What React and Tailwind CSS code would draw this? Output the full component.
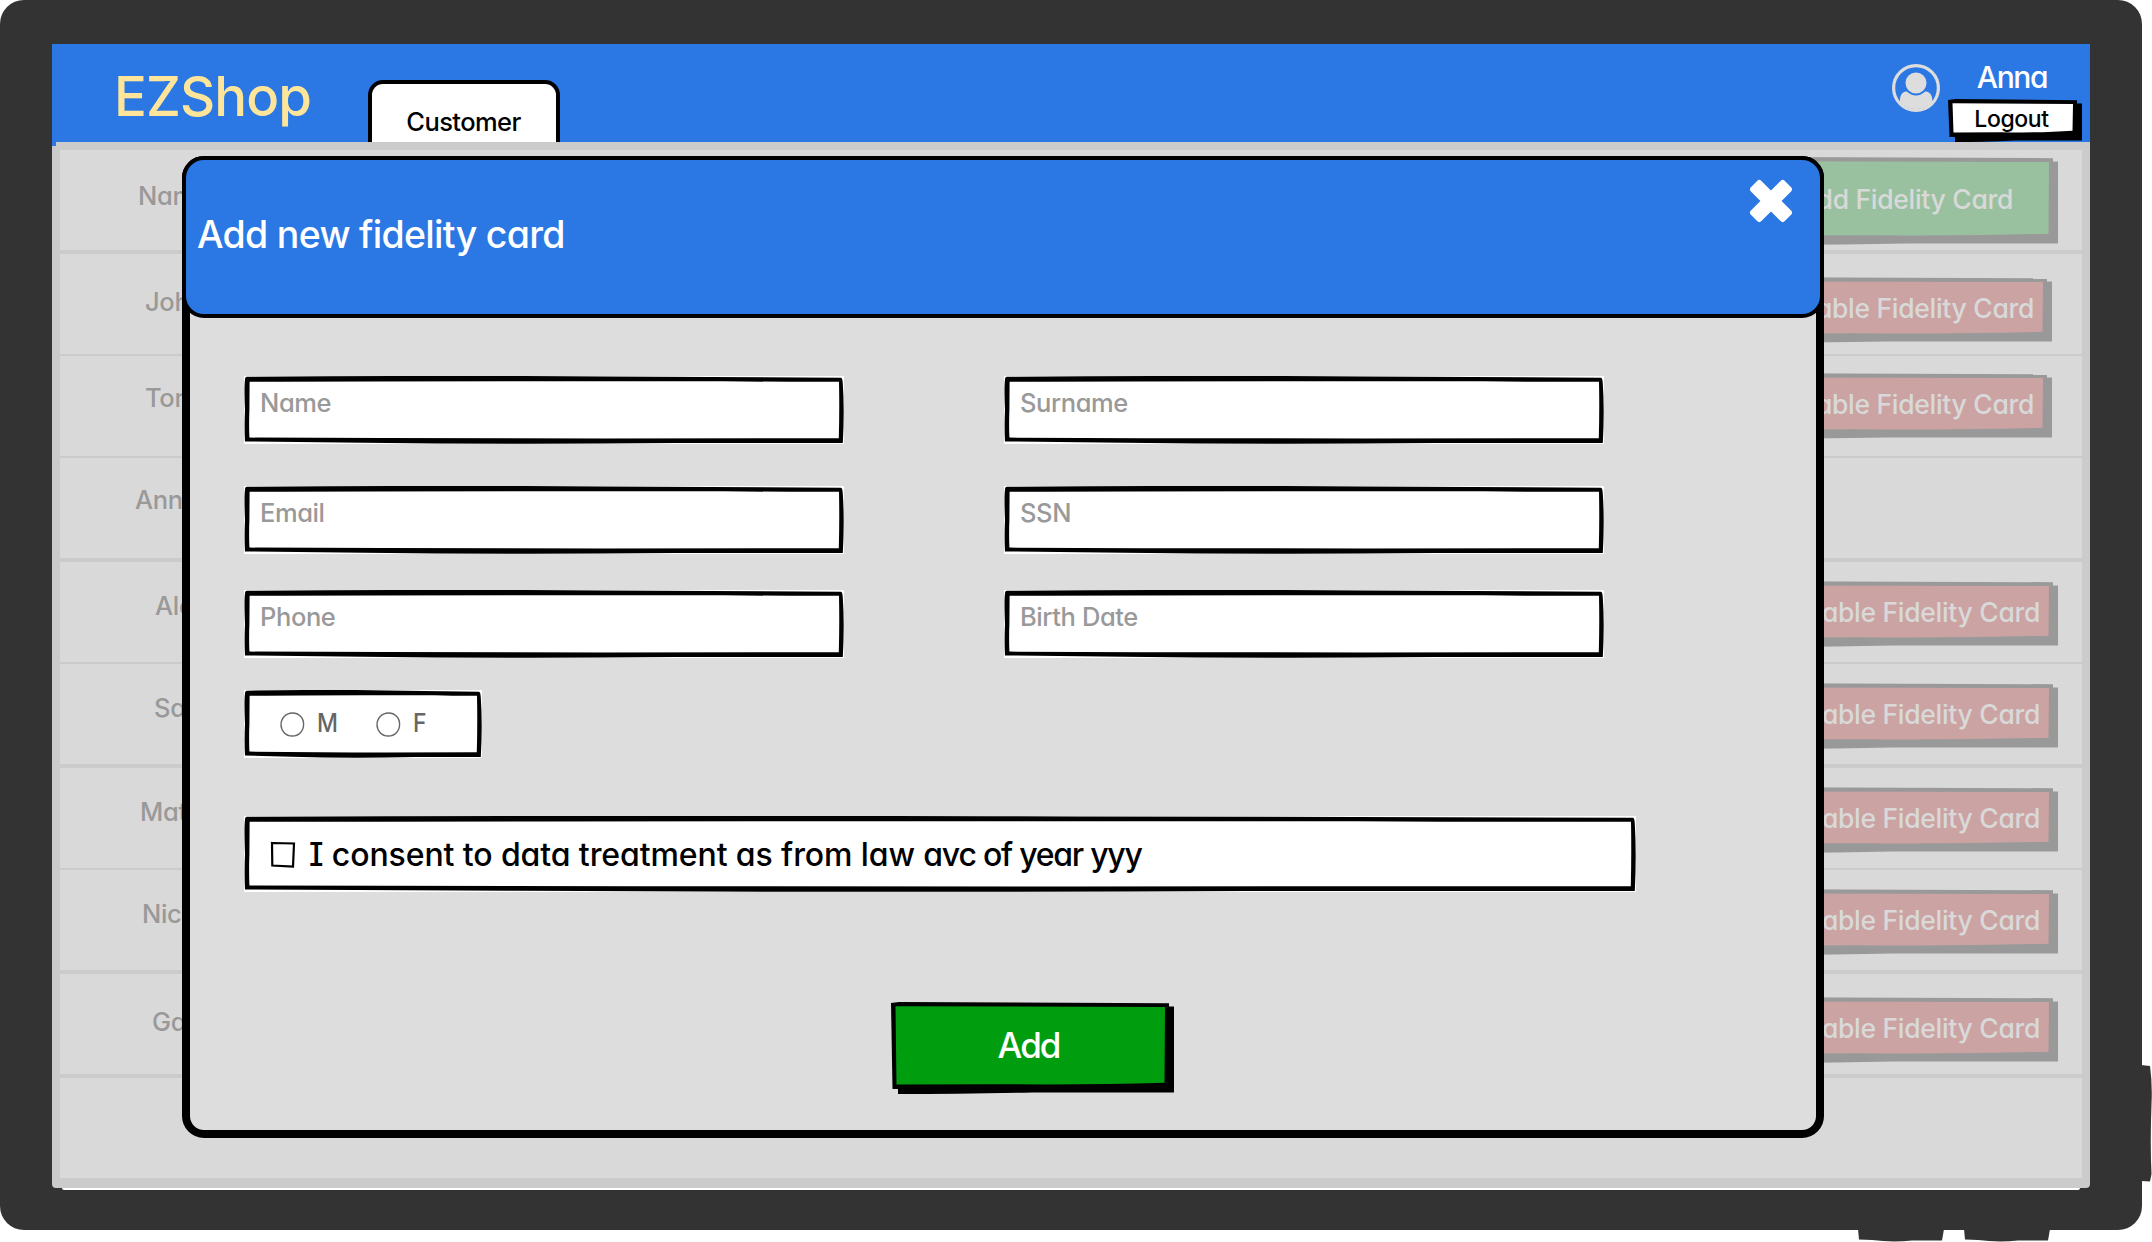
const rows = [
  { name: "Name", pad: "pt-[33px] pl-[78px]", gap: "mb-[4px]", action: "add" },
  { name: "John", pad: "pt-[35px] pl-[85px]", gap: "mb-[2px]", action: "mt-[23px] mr-[30px]" },
  { name: "Tom", pad: "pt-[29px] pl-[85px]", gap: "mb-[2px]", action: "mt-[17px] mr-[30px]" },
  { name: "Anna", pad: "pt-[29px] pl-[75px]", gap: "mb-[4px]", action: null },
  { name: "Alex", pad: "pt-[31px] pl-[95px]", gap: "mb-[2px]", action: "mt-[19px] mr-[24px]" },
  { name: "Sara", pad: "pt-[31px] pl-[94px]", gap: "mb-[4px]", action: "mt-[19px] mr-[24px]" },
  { name: "Matteo", pad: "pt-[31px] pl-[80px]", gap: "mb-[2px]", action: "mt-[19px] mr-[24px]" },
  { name: "Nico", pad: "pt-[31px] pl-[82px]", gap: "mb-[4px]", action: "mt-[19px] mr-[24px]" },
  { name: "Gaia", pad: "pt-[35px] pl-[92px]", gap: "mb-[4px]", action: "mt-[23px] mr-[24px]" },
];

/* Hand-drawn button: outline, hard drop shadow and a coloured face. */
function SketchButton({ w, h, fill, ink, className, children }) {
  return (
    <button className={"relative flex shrink-0 items-center whitespace-nowrap " + className}>
      <svg className="absolute inset-0" width={w} height={h} viewBox={`0 0 ${w} ${h}`}>
        <path fill={ink} d={`M7 4.5H${w}V${h - 1.5}H${w * 0.5}Q${w * 0.25} ${h} 7 ${h}Z`} />
        <path fill={ink} d={`M0 1L8 0L${w - 5} 1.2V${h - 4}L1.5 ${h - 5}Z`} />
        <path fill={fill} d={`M4.5 4.3L${w - 9} 5L${w - 9.5} ${h - 11.3}Q${w * 0.7} ${h - 9} ${w * 0.4} ${h - 9.8}L5.5 ${h - 9.5}Z`} />
      </svg>
      <span className="relative">{children}</span>
    </button>
  );
}

/* Hand-drawn white box with a slightly uneven black frame. */
function SketchBox({ w, h, className, children }) {
  return (
    <div className={"relative bg-white " + className}>
      <svg className="absolute inset-0" width={w} height={h} viewBox={`0 0 ${w} ${h}`}>
        <path
          fillRule="evenodd"
          d={`M3 0.7Q${w * 0.35} -0.7 ${w * 0.6} 0.4L${w - 3} 1.7Q${w - 1.5} 1.7 ${w - 1.2} 8Q${w + 0.6} ${h * 0.5} ${w - 1.2} ${h - 1}L${w * 0.72} ${h - 1}Q${w * 0.45} ${h + 0.8} ${w * 0.2} ${h - 1.3}L1 ${h - 2.6}Q0.2 ${h * 0.75} 1 ${h * 0.5}Q0 10 1 4Q1 0.7 3 0.7Z
              M5.6 5.8Q${w * 0.2} 5.2 ${w * 0.5} 5.2L${w * 0.8} 5.2Q${w * 0.9} 6 ${w - 5} 5.8Q${w - 4.4} ${h * 0.5} ${w - 5.2} ${h - 5.8}L${w * 0.6} ${h - 5.6}Q${w * 0.3} ${h - 5.6} 5.4 ${h - 6.4}Q4.8 ${h * 0.7} 5.4 ${h * 0.5}Z`}
        />
      </svg>
      <div className="relative">{children}</div>
    </div>
  );
}

function Field({ label }) {
  return (
    <SketchBox w={600} h={68} className="h-[68px] w-[600px]">
      <div className="pt-[14px] pl-[16px] text-[25.5px] leading-[26px] tracking-[-0.4px] text-[#999999]">{label}</div>
    </SketchBox>
  );
}

function Radio({ label }) {
  return (
    <div className="flex w-[96px]">
      <svg className="mt-[22px]" width="25" height="25" viewBox="0 0 25 25">
        <path d="M12.500 1C19 1 23.600 5.600 23.600 12.300S19 24 12.300 24S1 19 1 12.600S5.800 1 12.500 1Z" fill="none" stroke="#666666" strokeWidth="1.4" />
      </svg>
      <span className="mt-[20px] ml-[12px] inline-block origin-left scale-x-[0.9] text-[25.5px] leading-[26px] text-[#666666]">{label}</span>
    </div>
  );
}

function TopBar() {
  return (
    <header className="flex h-[98px] bg-[#2b78e4]">
      <div className="mt-[24px] ml-[62px] w-[254px] text-[54.5px] leading-[56px] tracking-[-0.9px] text-[#ffe599]">EZShop</div>
      <div className="mt-[36px] flex h-[62px] w-[192px] justify-center rounded-t-[15px] border-4 border-b-0 border-black bg-white pt-[25px] pr-[1px] text-[25.5px] leading-[26px] tracking-[-0.6px] text-black">
        Customer
      </div>
      <svg className="mt-[20px] ml-auto" width="48" height="48" viewBox="0 0 48 48">
        <circle cx="24" cy="24" r="22.400" fill="none" stroke="#dddddd" strokeWidth="3.200" />
        <path d="M8 38V36C8 30.500 11 27.200 16 27.200H32C37 27.200 40.300 30.500 40.300 36V38A22 22 0 0 1 8 38Z" fill="#dddddd" />
        <circle cx="24" cy="19" r="11.500" fill="#dddddd" stroke="#2b78e4" strokeWidth="2" />
      </svg>
      <div className="mr-[8px] ml-[8px] flex w-[134px] flex-col items-center">
        <div className="mt-[17px] mb-[6px] pr-[6px] text-[30px] leading-[32px] tracking-[-1.4px] text-white">Anna</div>
        <SketchButton w={134} h={43} fill="#ffffff" ink="#000000" className="h-[43px] w-[134px] justify-center pr-[7px] pb-[4px] text-[23px] leading-[24px] tracking-[-0.4px] text-black">
          Logout
        </SketchButton>
      </div>
    </header>
  );
}

function CustomerTable() {
  return (
    <div className="h-[1046px] rounded-b-[4px] border-8 border-b-[10px] border-[#cbcbcb] bg-[#cbcbcb]">
      {rows.map((r) => (
        <div key={r.name} className={"flex h-[100px] items-start justify-between overflow-hidden bg-[#d9d9d9] " + r.gap}>
          <div className={"text-[25.5px] leading-[26px] tracking-[-0.3px] text-[#999999] " + r.pad}>{r.name}</div>
          {r.action === "add" && (
            <SketchButton w={300} h={88} fill="#9ac19f" ink="#999999" className="mt-[7px] mr-[24px] h-[88px] w-[300px] justify-end pr-[45px] pb-[5px] text-[26.5px] leading-[28px] tracking-[-0.3px] text-[#d9d9d9]">
              Add Fidelity Card
            </SketchButton>
          )}
          {r.action && r.action !== "add" && (
            <SketchButton w={330} h={66} fill="#cca3a3" ink="#999999" className={"h-[66px] w-[330px] justify-end pr-[18px] pb-[5px] text-[26.5px] leading-[28px] tracking-[-0.3px] text-[#d9d9d9] " + r.action}>
              Disable Fidelity Card
            </SketchButton>
          )}
        </div>
      ))}
      <div className="h-[100px] bg-[#d9d9d9]" />
    </div>
  );
}

function FidelityCardDialog() {
  return (
    <section className="absolute top-[112px] left-[130px] h-[982px] w-[1642px] rounded-[22px] border-8 border-black bg-[#dddddd]">
      <div className="-mx-[8px] -mt-[8px] flex h-[162px] items-start justify-between rounded-[22px] border-4 border-black bg-[#2b78e4]">
        <h1 className="mt-[55px] ml-[11px] text-[37.5px] leading-[40px] tracking-[-0.7px] text-white">Add new fidelity card</h1>
        <svg className="mt-[18px] mr-[26px]" width="46" height="46" viewBox="-23 -23 46 46" fill="#ffffff">
          <rect x="-24" y="-7.400" width="48" height="14.800" rx="3" transform="rotate(45)" />
          <rect x="-24" y="-7.400" width="48" height="14.800" rx="3" transform="rotate(-45)" />
        </svg>
      </div>
      <form className="flex flex-col items-start pt-[58px] pl-[54px]">
        <div className="mb-[42px] flex gap-[160px]">
          <Field label="Name" />
          <Field label="Surname" />
        </div>
        <div className="mb-[36px] flex gap-[160px]">
          <Field label="Email" />
          <Field label="SSN" />
        </div>
        <div className="mb-[32px] flex gap-[160px]">
          <Field label="Phone" />
          <Field label="Birth Date" />
        </div>
        <SketchBox w={238} h={68} className="mb-[58px] h-[68px] w-[238px]">
          <div className="flex pl-[36px]">
            <Radio label="M" />
            <Radio label="F" />
          </div>
        </SketchBox>
        <SketchBox w={1392} h={76} className="h-[76px] w-[1392px]">
          <div className="flex pl-[26px]">
            <svg className="mt-[25px]" width="26" height="28" viewBox="0 0 26 28">
              <path d="M2 2L24 2.500L23 25.500L2.300 24.500Z" fill="none" stroke="#000000" strokeWidth="2.200" />
            </svg>
            <span className="mt-[23px] ml-[13px] text-[32px] leading-[32px] tracking-[-0.1px] text-black [font-feature-settings:'cv11','cv08']">
              I consent to data treatment as from law <span className="tracking-[-1.25px]">avc of year yyy</span>
            </span>
          </div>
        </SketchBox>
        <SketchButton w={283} h={92} fill="#009e0f" ink="#000000" className="mt-[110px] ml-[647px] h-[92px] w-[283px] justify-center pr-[8px] pb-[7px] text-[35px] leading-[36px] tracking-[-2px] text-white">
          Add
        </SketchButton>
      </form>
    </section>
  );
}

export default function App() {
  return (
    <div className="relative h-[1242px] w-[2152px] overflow-hidden bg-white font-['Inter',sans-serif] font-medium [font-feature-settings:'cv11']">
      <div className="h-[1230px] w-[2142px] rounded-[24px] bg-[#333333] pt-[44px] pl-[52px]">
        <div className="relative w-[2038px]">
          <TopBar />
          <CustomerTable />
          <div className="mx-[10px] h-[2px] rounded-b-[8px] bg-white" />
          <span className="absolute top-[98px] left-0 h-[4px] w-[4px] bg-[#2b78e4]" />
          <FidelityCardDialog />
        </div>
      </div>
      <svg className="absolute top-[1064px] left-[2141px]" width="11" height="119" viewBox="0 0 11 119" fill="#333333">
        <path d="M0 1L9 2Q11.500 20 10.500 40Q9 80 10.500 110L9 117.500L0 117Z" />
      </svg>
      <svg className="absolute top-[1229px] left-[1857px]" width="194" height="13" viewBox="0 0 194 13" fill="#333333">
        <path d="M1 0H87L85 11.500L55 11.500Q35 13.500 15 11L2 10.500Z" />
        <path d="M107 0H193L191 11.500L161 11.500Q141 13.500 121 11L108 10.500Z" />
      </svg>
    </div>
  );
}
